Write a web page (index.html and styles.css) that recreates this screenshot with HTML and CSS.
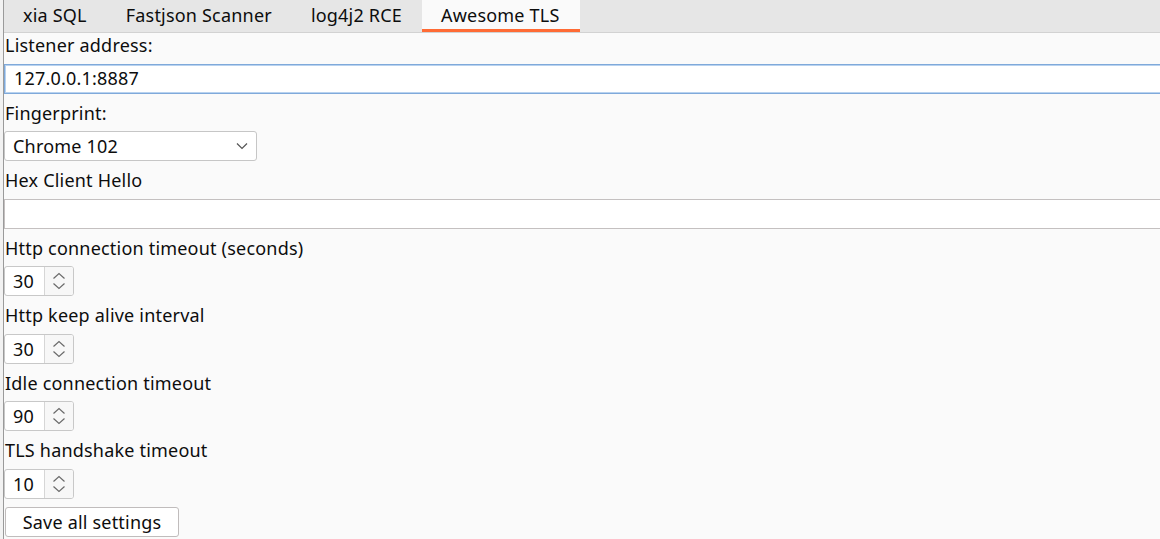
FILE: index.html
```html
<!DOCTYPE html>
<html>
<head>
<meta charset="utf-8">
<link rel="stylesheet" href="styles.css">
</head>
<body>
<div class="frame">
  <div class="tabbar">
    <div class="tab">xia SQL</div>
    <div class="tab">Fastjson Scanner</div>
    <div class="tab">log4j2 RCE</div>
    <div class="tab active">Awesome TLS</div>
  </div>
  <div class="panel">
    <div class="label">Listener address:</div>
    <div class="field focused">127.0.0.1:8887</div>
    <div class="label">Fingerprint:</div>
    <div class="select">
      <span>Chrome 102</span>
      <svg class="chev" width="12" height="8" viewBox="0 0 12 8"><path d="M1 1.5 L6 6.5 L11 1.5" fill="none" stroke="#555" stroke-width="1.2"/></svg>
    </div>
    <div class="label">Hex Client Hello</div>
    <div class="field plain"></div>
    <div class="label">Http connection timeout (seconds)</div>
    <div class="spinner"><div class="num">30</div><div class="arrows"><svg width="14" height="18" viewBox="0 0 14 18"><path d="M1.5 6.5 L7 1.5 L12.5 6.5" fill="none" stroke="#6a6a6a" stroke-width="1.2"/><path d="M1.5 11.5 L7 16.5 L12.5 11.5" fill="none" stroke="#6a6a6a" stroke-width="1.2"/></svg></div></div>
    <div class="label">Http keep alive interval</div>
    <div class="spinner"><div class="num">30</div><div class="arrows"><svg width="14" height="18" viewBox="0 0 14 18"><path d="M1.5 6.5 L7 1.5 L12.5 6.5" fill="none" stroke="#6a6a6a" stroke-width="1.2"/><path d="M1.5 11.5 L7 16.5 L12.5 11.5" fill="none" stroke="#6a6a6a" stroke-width="1.2"/></svg></div></div>
    <div class="label">Idle connection timeout</div>
    <div class="spinner"><div class="num">90</div><div class="arrows"><svg width="14" height="18" viewBox="0 0 14 18"><path d="M1.5 6.5 L7 1.5 L12.5 6.5" fill="none" stroke="#6a6a6a" stroke-width="1.2"/><path d="M1.5 11.5 L7 16.5 L12.5 11.5" fill="none" stroke="#6a6a6a" stroke-width="1.2"/></svg></div></div>
    <div class="label">TLS handshake timeout</div>
    <div class="spinner"><div class="num">10</div><div class="arrows"><svg width="14" height="18" viewBox="0 0 14 18"><path d="M1.5 6.5 L7 1.5 L12.5 6.5" fill="none" stroke="#6a6a6a" stroke-width="1.2"/><path d="M1.5 11.5 L7 16.5 L12.5 11.5" fill="none" stroke="#6a6a6a" stroke-width="1.2"/></svg></div></div>
    <div class="button">Save all settings</div>
  </div>
</div>
</body>
</html>
```
FILE: styles.css
```css
html, body {
  margin: 0;
  padding: 0;
  height: 100%;
  overflow: hidden;
}
body {
  background: #f2f2f2;
  font-family: "Noto Sans", "Open Sans", sans-serif;
  font-size: 18px;
  letter-spacing: 0.2px;
  color: #0d0d0d;
}
.frame {
  margin-left: 3px;
  border-left: 1px solid #9a9a9a;
  height: 100%;
  background: #fafafa;
}
.tabbar {
  display: flex;
  height: 32px;
  background: #e6e6e6;
  border-bottom: 1px solid #d2d2d2;
}
.tab {
  padding: 0 20px 0 19px;
  line-height: 31px;
  height: 29px;
  white-space: nowrap;
}
.tab.active {
  background: #fafafa;
  border-bottom: 3px solid #ff6b35;
}
.panel {
  display: flex;
  flex-direction: column;
  align-items: flex-start;
  gap: 7.75px;
  padding-top: 1px;
}
.label {
  line-height: 22px;
  height: 22px;
  padding-left: 1px;
  white-space: nowrap;
}
.field {
  box-sizing: border-box;
  width: 1200px;
  height: 30px;
  background: #fff;
  padding-left: 9px;
  line-height: 27px;
}
.field.focused {
  border: 1px solid #7fa9da;
  box-shadow: inset 0 0 0 1px #b8d2ef;
}
.field.plain {
  border: 1px solid #c4c0c0;
}
.select {
  box-sizing: border-box;
  width: 253px;
  height: 30px;
  background: #fff;
  border: 1px solid #c6c6c6;
  border-radius: 3px;
  display: flex;
  align-items: center;
  justify-content: space-between;
  padding: 0 8px 0 8px;
}
.chev {
  display: block;
}
.spinner {
  box-sizing: border-box;
  width: 70px;
  height: 30px;
  display: flex;
  border: 1px solid #c8c8c8;
  border-radius: 3px;
  background: #fff;
  overflow: hidden;
}
.num {
  width: 40px;
  border-right: 1px solid #d6d6d6;
  box-sizing: border-box;
  padding-left: 8px;
  line-height: 28px;
}
.arrows {
  flex: 1;
  background: #f7f7f7;
  display: flex;
  align-items: center;
  justify-content: center;
}
.arrows svg {
  display: block;
}
.button {
  box-sizing: border-box;
  margin-left: 1px;
  width: 174px;
  height: 30px;
  background: #fff;
  border: 1px solid #c0bcbc;
  border-radius: 3px;
  text-align: center;
  line-height: 28px;
}
```
